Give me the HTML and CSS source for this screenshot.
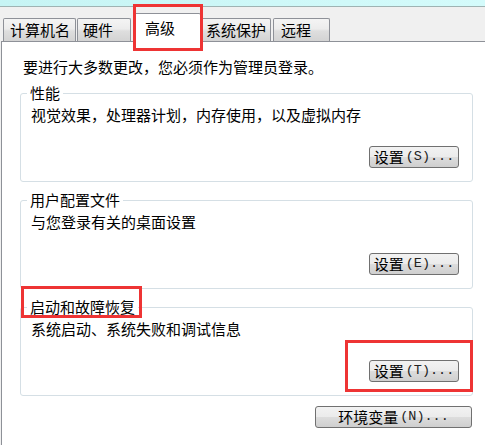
FILE: index.html
```html
<!DOCTYPE html>
<html lang="zh-CN">
<head>
<meta charset="utf-8">
<title>系统属性 - 高级</title>
<link rel="stylesheet" href="styles.css">
</head>
<body>
<div class="titlebar"></div>
<div class="tabstrip">
  <div class="tab t1">计算机名</div>
  <div class="tab t2">硬件</div>
  <div class="tab active">高级<span class="mark mark-tab"></span></div>
  <div class="tab t4">系统保护</div>
  <div class="tab t5">远程</div>
</div>
<div class="panel">
  <p class="intro">要进行大多数更改，您必须作为管理员登录。</p>
  <fieldset class="group">
    <legend>性能</legend>
    <p class="desc">视觉效果，处理器计划，内存使用，以及虚拟内存</p>
    <div class="actions"><span class="btnwrap"><button class="btn">设置<span class="lat">(S)...</span></button></span></div>
  </fieldset>
  <fieldset class="group">
    <legend>用户配置文件</legend>
    <p class="desc">与您登录有关的桌面设置</p>
    <div class="actions"><span class="btnwrap"><button class="btn">设置<span class="lat">(E)...</span></button></span></div>
  </fieldset>
  <fieldset class="group">
    <legend>启动和故障恢复<span class="mark mark-legend"></span></legend>
    <p class="desc">系统启动、系统失败和调试信息</p>
    <div class="actions"><span class="btnwrap"><button class="btn">设置<span class="lat">(T)...</span></button><span class="mark mark-btn"></span></span></div>
  </fieldset>
  <div class="footer"><button class="btn wide">环境变量<span class="lat">(N)...</span></button></div>
</div>
</body>
</html>
```
FILE: styles.css
```css
* { box-sizing: border-box; }
html, body { margin: 0; }
body {
  width: 485px;
  height: 445px;
  overflow: hidden;
  background: #f0f0f0;
  font: 15px/16px "Noto Sans CJK SC", sans-serif;
  color: #000;
}
.titlebar {
  height: 7px;
  background: linear-gradient(90deg, #c6f4f4, #d4fbfb);
  border-bottom: 1px solid #9fb3b3;
}
.tabstrip {
  display: flex;
  align-items: flex-end;
  height: 34px;
  padding-left: 3px;
}
.tab {
  height: 23px;
  border: 1px solid #8e9198;
  border-bottom: none;
  border-radius: 2px 2px 0 0;
  background: linear-gradient(#f4f4f4, #ececec 45%, #dedede 55%, #d3d3d3);
  display: flex;
  align-items: center;
  padding-left: 6px;
  white-space: nowrap;
}
.t1 { width: 73px; }
.t2 { width: 54px; margin-left: 1px; padding-left: 5px; }
.active {
  width: 68px;
  height: 29px;
  margin-left: 2px;
  margin-bottom: -1px;
  background: #fff;
  position: relative;
  z-index: 1;
  align-items: flex-start;
  padding-top: 6px;
  padding-left: 11px;
}
.t4 { width: 70px; padding-left: 4px; }
.t5 { width: 57px; margin-left: 2px; padding-left: 7px; }

.panel {
  background: #fff;
  border-top: 1px solid #8e9198;
  border-left: 1px solid #8e9198;
  margin-left: 1px;
  height: 404px;
  padding: 17px 0 0 18px;
}
.intro { margin: 0 0 10px 3px; }
.group {
  width: 453px;
  margin: 0 0 10px;
  padding: 6px 13px 13px 10px;
  border: 1px solid #d5dfe5;
  border-radius: 3px;
  min-inline-size: 0;
}
.group legend {
  padding: 0 3px;
  margin-left: -4px;
  position: relative;
}
.desc { margin: 0; }
.actions {
  display: flex;
  justify-content: flex-end;
  margin-top: 23px;
}
.btnwrap { position: relative; display: block; }
.btn {
  width: 90px;
  height: 22px;
  border: 1px solid #707070;
  border-radius: 3px;
  background: linear-gradient(#f2f2f2, #ebebeb 50%, #dddddd 50%, #cfcfcf);
  font: inherit;
  color: #000;
  padding: 0;
  display: flex;
  align-items: center;
  justify-content: center;
}
.btn.wide { width: 157px; }
.lat {
  font-family: "Liberation Mono", monospace;
  font-size: 13.5px;
  margin-left: 2px;
  color: #222;
}
.footer {
  width: 453px;
  display: flex;
  justify-content: flex-end;
  padding-right: 1px;
  margin-top: 6px;
}
.mark {
  position: absolute;
  border: 3px solid #ee3434;
  pointer-events: none;
}
.mark-tab { left: -1px; top: -10px; width: 70px; height: 47px; }
.mark-legend { left: -6px; top: -13px; width: 121px; height: 32px; }
.mark-btn { left: -24px; top: -20px; width: 128px; height: 52px; }
```
